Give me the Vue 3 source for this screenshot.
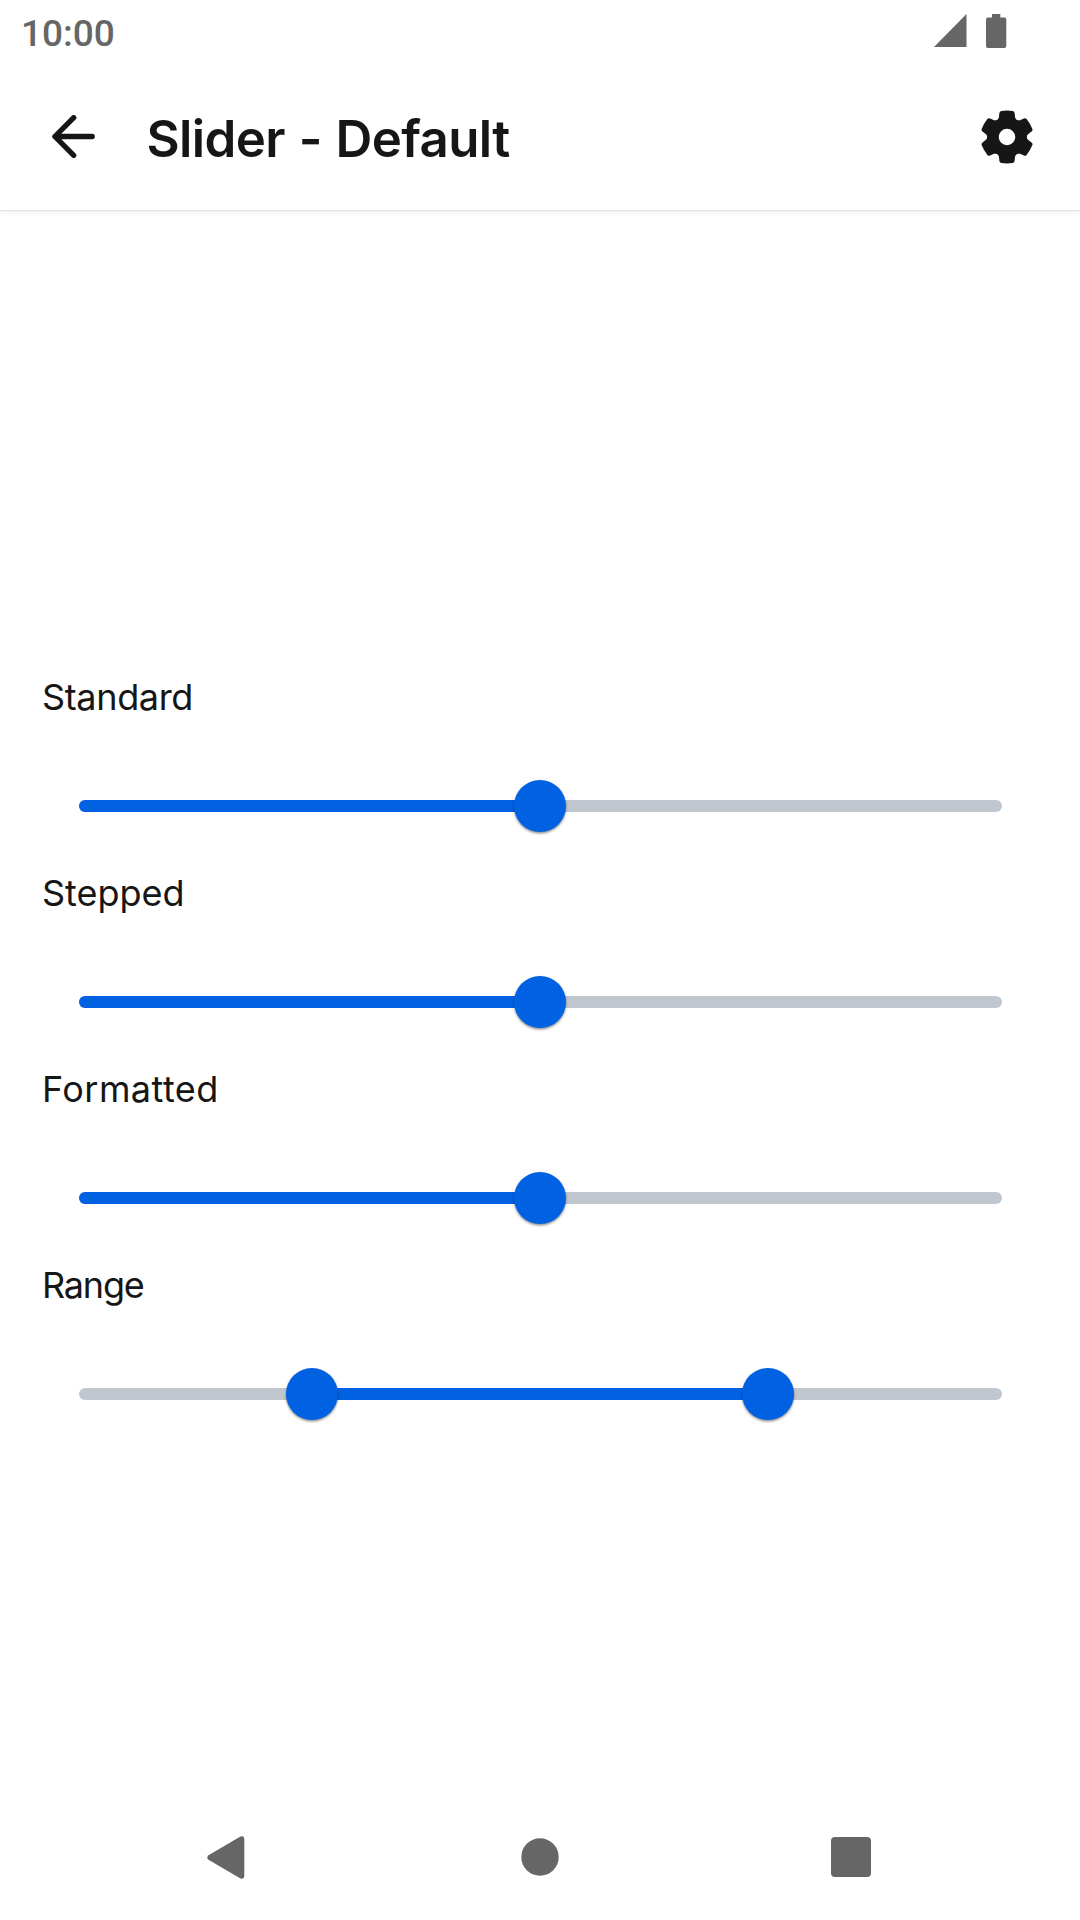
<script setup>
const sliders = [
  { label: 'Standard', spacing: -0.35, from: 0, to: 50, thumbs: [50] },
  { label: 'Stepped', spacing: 0, from: 0, to: 50, thumbs: [50] },
  { label: 'Formatted', spacing: 0.45, from: 0, to: 50, thumbs: [50] },
  { label: 'Range', spacing: -1.2, from: 25.3, to: 74.7, thumbs: [25.3, 74.7] },
]
const tooth = [0, 60, 120, 180, 240, 300]
</script>

<template>
  <div class="screen">
    <div class="status">
      <span class="clock">10:00</span>
      <svg class="signal" width="33" height="33" viewBox="0 0 33 33"><path d="M0 33 32.500 0V33Z" /></svg>
      <svg class="battery" width="21" height="34" viewBox="0 0 21 34"><path d="M6 0h8.300v3.500H18.300Q20.300 3.500 20.300 5.500V32Q20.300 34 18.300 34H2Q0 34 0 32V5.500Q0 3.500 2 3.500H6Z" /></svg>
    </div>
    <header class="bar">
      <svg class="back" width="44" height="44" viewBox="0 0 44 44"><path d="M40.200 21.500H3M21.700 2.700 2.900 21.500 21.700 40.300" /></svg>
      <h1 class="title">Slider - Default</h1>
      <svg class="gear" width="54" height="54" viewBox="-80 -80 160 160">
        <path fill-rule="evenodd" d="M-50 0A50 50 0 1 0 50 0A50 50 0 1 0-50 0ZM-24.500 0A24.500 24.500 0 1 0 24.500 0A24.500 24.500 0 1 0-24.500 0Z" />
        <path v-for="a in tooth" :key="a" :transform="`rotate(${a})`" d="M-36-49C-29-49-25-52-24-58L-22.500-71Q-22-76-17-77Q0-79.500 17-77Q22-76 22.500-71L24-58C25-52 29-49 36-49L24-32H-24Z" />
      </svg>
    </header>
    <main class="content">
      <section v-for="s in sliders" :key="s.label" class="row">
        <div class="label" :style="{ letterSpacing: s.spacing + 'px' }">{{ s.label }}</div>
        <div class="slider">
          <div class="track">
            <div class="fill" :style="{ left: s.from + '%', width: s.to - s.from + '%' }"></div>
            <div v-for="t in s.thumbs" :key="t" class="thumb" :style="{ left: t + '%' }"></div>
          </div>
        </div>
      </section>
    </main>
    <nav class="nav">
      <svg width="38" height="43" viewBox="0 0 38 43"><path d="M1.500 19.200 33 .7Q37.300-.7 37.300 3.500V39.500Q37.300 43.700 33 42.300L1.500 23.800Q-1 21.500 1.500 19.200Z" /></svg>
      <svg class="home" width="38" height="38" viewBox="0 0 38 38"><circle cx="19" cy="19" r="18.700" /></svg>
      <svg width="40" height="40" viewBox="0 0 40 40"><rect width="40" height="40" rx="4" /></svg>
    </nav>
  </div>
</template>

<style>
body { margin: 0; background: #fff; }
</style>

<style scoped>
.screen { width: 1080px; height: 1920px; display: flex; flex-direction: column; background: #fff; color: #161616; font-family: Inter, sans-serif; overflow: hidden; }
svg { display: block; flex: none; }
.status { height: 63px; box-sizing: border-box; display: flex; align-items: flex-start; padding: 14px 73px 0 21px; color: #666; fill: #666; }
.clock { font: 500 37px/38px Roboto, sans-serif; letter-spacing: 0; padding-top: 1px; margin-right: auto; }
.signal { margin-right: 19px; }
.bar { height: 147px; box-sizing: border-box; display: flex; align-items: flex-start; padding: 46.500px 46.500px 0 52px; box-shadow: 0 1px 1px #e2e2e2, 0 2px 6px rgba(0, 0, 0, .07); clip-path: inset(0 0 -12px 0); }
.back { margin-top: 5.500px; fill: none; stroke: #161616; stroke-width: 5.300; stroke-linecap: round; stroke-linejoin: round; }
.title { margin: -1.500px auto 0 50.500px; font-size: 51px; line-height: 62px; font-weight: 600; letter-spacing: -0.6px; word-spacing: 1.4px; white-space: nowrap; }
.gear { fill: #161616; }
.content { flex: 1; padding-top: 465px; }
.row { height: 196px; }
.label { padding: 0 0 22px 42px; font-size: 36px; line-height: 44px; font-feature-settings: "calt" 0, "liga" 0; }
.slider { height: 130px; display: flex; align-items: center; padding: 0 78.500px; }
.track { position: relative; width: 100%; height: 11.500px; border-radius: 6px; background: #c1c7cf; }
.fill { position: absolute; top: 0; height: 100%; border-radius: 6px; background: #0062e3; }
.thumb { position: absolute; top: 50%; width: 52.500px; height: 52.500px; margin: -26.250px 0 0 -26.250px; border-radius: 50%; background: #0062e3; box-shadow: 0 1.500px 2.500px rgba(0, 0, 0, .45); }
.nav { height: 126px; box-sizing: border-box; display: flex; align-items: center; justify-content: space-between; padding: 0 209px 0 206.500px; fill: #666; }
.home { margin-left: 4px; }
</style>
